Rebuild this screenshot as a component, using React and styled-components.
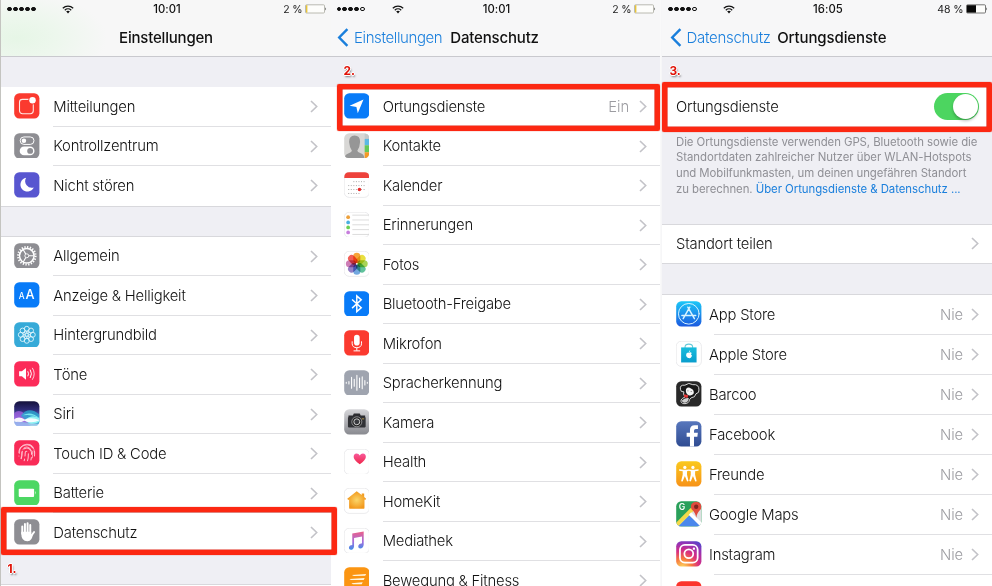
import React from "react";
import styled, { createGlobalStyle } from "styled-components";
import { Fingerprint } from "lucide-react";

const GlobalStyle = createGlobalStyle`
  * { box-sizing: border-box; }
  html, body { margin: 0; padding: 0; overflow: hidden; background: #fff; }
  body { font-family: Inter, "Liberation Sans", sans-serif; color: #111; }
`;

const Board = styled.main`
  position: relative;
  width: 992px;
  height: 586px;
  overflow: hidden;
  display: grid;
  grid-template-columns: 331px 329px 332px;
  background: #fff;
`;

const Phone = styled.section`
  height: 586px;
  overflow: hidden;
  min-width: 0;
  border-left: ${(p) => p.$edge || "0"};
`;

const Header = styled.header`
  height: 57px;
  border-bottom: 1px solid #c9c9ce;
  background: ${(p) =>
    p.$tint
      ? "radial-gradient(ellipse 90px 46px at 16px 38px, #e6f6e6 0%, #edf7ed 45%, rgba(247,247,247,0) 100%), #f7f7f7"
      : "#f7f7f8"};
`;

const StatusBar = styled.div`
  height: 18px;
  display: grid;
  grid-template-columns: 55px 75px 60px 1fr auto;
  align-items: center;
  padding: 0 ${(p) => p.$right}px 0 ${(p) => p.$left}px;
`;

const Signal = styled.div`
  display: flex;
  gap: 1.1px;
`;

const Dot = styled.i`
  width: 4.9px;
  height: 4.9px;
  border-radius: 50%;
  border: 0.8px solid #111;
  background: ${(p) => (p.$on ? "#111" : "transparent")};
`;

const Clock = styled.time`
  font-size: 11.3px;
  font-weight: 500;
  text-align: center;
  letter-spacing: 0.05px;
`;

const Charge = styled.div`
  display: flex;
  align-items: center;
  justify-content: flex-end;
  gap: 2.5px;
  font-size: 10.5px;
  white-space: nowrap;
  letter-spacing: -0.1px;
  color: #222;
`;

const NavBar = styled.nav`
  height: 38px;
  display: flex;
  align-items: center;
  justify-content: ${(p) => (p.$centered ? "center" : "flex-start")};
  padding-left: ${(p) => p.$pad || 0}px;
  white-space: nowrap;
  font-size: 15px;
`;

const Back = styled.a`
  display: flex;
  align-items: center;
  gap: 5px;
  color: #1a7fdc;
  font-weight: 350;
  letter-spacing: ${(p) => p.$ls}px;
  margin-right: ${(p) => p.$gap}px;
`;

const Title = styled.h1`
  margin: 0;
  font-size: 15px;
  font-weight: 500;
  letter-spacing: ${(p) => p.$ls || 0}px;
`;

const Spacer = styled.div`
  height: ${(p) => p.$h}px;
  background: #efeff4;
`;

const Group = styled.ul`
  list-style: none;
  margin: 0;
  padding: 0;
  background: #fff;
  border-bottom: ${(p) => (p.$open ? "0" : "1px solid #d8d8dc")};
  border-top: ${(p) => (p.$top ? "1px solid #d8d8dc" : "0")};
`;

const RowBox = styled.li`
  height: ${(p) => p.$h}px;
  display: flex;
  align-items: stretch;
  padding-left: ${(p) => p.$pad}px;
`;

const IconCell = styled.span`
  width: ${(p) => p.$w}px;
  display: flex;
  align-items: center;
  flex: none;
  padding-bottom: ${(p) => p.$lift}px;
  svg { display: block; }
`;

const RowBody = styled.div`
  flex: 1;
  position: relative;
  display: flex;
  align-items: center;
  font-size: 14.8px;
  font-weight: 350;
  white-space: nowrap;
  padding-right: ${(p) => p.$right}px;
  &::after {
    content: "";
    position: absolute;
    left: ${(p) => p.$inset}px;
    right: 0;
    bottom: 0;
    height: 1px;
    background: ${(p) => (p.$line ? "#e0e0e3" : "transparent")};
  }
`;

const Label = styled.span`
  flex: 1;
  letter-spacing: ${(p) => p.$ls}px;
`;

const Value = styled.span`
  color: #9c9ca1;
  margin-right: ${(p) => p.$gap}px;
  letter-spacing: -0.1px;
`;

const Footnote = styled.p`
  margin: 0;
  height: 97px;
  padding: 8px 0 0 16px;
  background: #efeff4;
  font-size: 11.4px;
  line-height: 15.85px;
  color: #8f8f95;
  white-space: nowrap;
`;

const Line = styled.span`
  display: block;
  letter-spacing: ${(p) => p.$ls}px;
`;

const Link = styled.a`
  color: #1a7fdc;
`;

const Switch = styled.span`
  width: 45px;
  height: 27px;
  border-radius: 14px;
  background: #4cd560;
  display: flex;
  justify-content: flex-end;
  padding: 1px;
`;

const Knob = styled.i`
  width: 25px;
  height: 25px;
  border-radius: 50%;
  background: #fff;
  box-shadow: 0 2px 3px rgba(0, 0, 0, 0.25);
`;

const Highlight = styled.div`
  position: absolute;
  left: ${(p) => p.$x}px;
  top: ${(p) => p.$y}px;
  width: ${(p) => p.$w}px;
  height: ${(p) => p.$h}px;
  border: 5px solid #fc2812;
  border-radius: 2px;
  box-shadow: inset 0 0 0 0.6px #e0281a, 0 0 1px #d21a0c;
`;

const Step = styled.b`
  position: absolute;
  left: ${(p) => p.$x}px;
  top: ${(p) => p.$y}px;
  font: 700 11.8px/12px Inter, sans-serif;
  color: #e01207;
  text-shadow: -1px 0 #fff, 1px 0 #fff, 0 -1px #fff, 0 1px #fff, 1px 2px 2px rgba(0, 0, 0, 0.5);
`;

const Divider = styled.div`
  position: absolute;
  left: 660px;
  top: 0;
  width: 2px;
  height: 586px;
  background: linear-gradient(90deg, #fbfbfb, #f4f4f6);
`;

const Wifi = () => (
  <svg width="12" height="9" viewBox="0 0 12 9" fill="none" stroke="#111" strokeWidth="1.25">
    <path d="M0.8 3.2C3.8.3 8.2.3 11.2 3.2" />
    <path d="M2.8 5.2C4.6 3.5 7.4 3.5 9.2 5.2" />
    <path d="M4.1 6.3C5.2 5.4 6.8 5.4 7.9 6.3L6 8.6Z" fill="#111" stroke="none" />
  </svg>
);

const BatteryGauge = ({ level, low }) => (
  <svg width="22" height="10" viewBox="0 0 22 10">
    <rect x=".5" y=".8" width="19" height="8.2" rx="1" fill="#fdfdfb" stroke={low ? "#aaa99f" : "#555"} strokeWidth=".8" />
    <rect x="1" y="1.2" width={level} height="7.4" fill={low ? "#e8c53a" : "#080808"} />
    <path d="M20.3 3.2Q22 4.9 20.3 6.6Z" fill="#444" />
  </svg>
);

const Chevron = () => (
  <svg width="8" height="13" viewBox="0 0 8 13" fill="none" stroke="#c3c3c8" strokeWidth="1.6">
    <path d="M1 1L6.7 6.5L1 12" />
  </svg>
);

const BackArrow = () => (
  <svg width="12" height="19" viewBox="0 0 12 19" fill="none" stroke="#1a7fdc" strokeWidth="2.4">
    <path d="M10.4 1.2L2.2 9.5L10.4 17.8" />
  </svg>
);

/* App icons share a 26-unit rounded tile. */
const Tile = ({ fill = "#fff", outline, children }) => (
  <svg width="25.6" height="25.6" viewBox="0 0 26 26">
    <rect x=".2" y=".2" width="25.6" height="25.6" rx="5.2" fill={fill} stroke={outline ? "#e6e6e8" : "none"} strokeWidth=".8" />
    {children}
  </svg>
);

const ring = (n, r, start = 0) =>
  Array.from({ length: n }, (_, i) => {
    const a = start + (i * 2 * Math.PI) / n;
    return [13 + r * Math.sin(a), 13 - r * Math.cos(a)];
  });

const icons = {
  notifications: (
    <Tile fill="#fb3a2f">
      <rect x="5.6" y="6.5" width="14" height="14.5" rx="3" fill="none" stroke="#ffe9e5" strokeWidth="1.1" />
      <circle cx="18.8" cy="7.3" r="4.3" fill="#fb3a2f" />
      <circle cx="18.8" cy="7.3" r="3.3" fill="#fff" />
    </Tile>
  ),
  control: (
    <Tile fill="#8e8e93">
      <rect x="6.3" y="4" width="14" height="7.6" rx="3.8" fill="none" stroke="#fff" />
      <circle cx="10.1" cy="7.8" r="2.3" fill="#fff" />
      <rect x="5.8" y="13.8" width="15" height="8.8" rx="4.4" fill="#fff" />
      <circle cx="16.4" cy="18.2" r="3" fill="#8e8e93" />
    </Tile>
  ),
  moon: (
    <Tile fill="#5856d0">
      <path d="M12.3 5.8A7.1 7.1 0 1 0 20.1 15.7A6.8 6.8 0 0 1 12.3 5.8Z" fill="#fff" />
    </Tile>
  ),
  gear: (
    <Tile fill="#8e8e93">
      <g fill="none" stroke="#fff">
        <circle cx="13" cy="13" r="8.9" strokeWidth="2.1" strokeDasharray="1.33 1.466" />
        <circle cx="13" cy="13" r="7.4" strokeWidth="1.5" />
        <circle cx="13" cy="13" r="2" strokeWidth=".9" />
        <path d="M15 13H20.2M12 11.3L9.4 6.8M12 14.7L9.4 19.2" strokeWidth="1.1" />
      </g>
    </Tile>
  ),
  display: (
    <Tile fill="#087bf8">
      <g fill="#fff" fontFamily="Inter" fontWeight="500">
        <text x="4.7" y="17.2" fontSize="8.4">A</text>
        <text x="11.6" y="17.2" fontSize="13">A</text>
      </g>
    </Tile>
  ),
  wallpaper: (
    <Tile fill="#36aad8">
      <g fill="none" stroke="#e3f6fc" strokeWidth=".9">
        {ring(8, 6.1).map(([x, y]) => <circle key={x + "," + y} cx={x} cy={y} r="2.5" />)}
        {ring(8, 3, 0.39).map(([x, y]) => <circle key={x + "," + y} cx={x} cy={y} r="1.2" strokeWidth=".7" />)}
        <circle cx="13" cy="13" r="1.5" />
      </g>
    </Tile>
  ),
  sound: (
    <Tile fill="#fc2b59">
      <path d="M5.2 10.5H8L12.2 7V19L8 15.5H5.2Z" fill="#fff" />
      <g fill="none" stroke="#fff" strokeWidth="1" strokeLinecap="round">
        <path d="M14.2 10.8Q15.5 13 14.2 15.2M16.6 9.1Q19 13 16.6 16.9" />
        <path d="M18.8 7.3Q22.4 13 18.8 18.7" opacity=".8" />
      </g>
    </Tile>
  ),
  siri: (
    <Tile fill="url(#siri)">
      <defs>
        <linearGradient id="siri" x2="0" y2="1">
          <stop offset="0" stopColor="#14113a" />
          <stop offset=".35" stopColor="#2e2b78" />
          <stop offset=".6" stopColor="#5c66c4" />
          <stop offset="1" stopColor="#a9dcf0" />
        </linearGradient>
        <clipPath id="siriClip"><rect x=".2" y=".2" width="25.6" height="25.6" rx="5.2" /></clipPath>
      </defs>
      <g clipPath="url(#siriClip)">
        <path d="M0 12.5Q5 7.5 11 13Q13 16 18 18L14 22L0 20Z" fill="#a65fe0" opacity=".75" />
        <path d="M7 15Q15 4.5 26 14V23Q16 24 7 15Z" fill="#2aa9cf" opacity=".8" />
        <path d="M9 14.5Q17 9.5 26 17.5Q18 13 9 14.5Z" fill="#78e6ee" />
        <path d="M11 19.5Q18 12.5 26 17.5V21Q18 26 11 19.5Z" fill="#8ff3f4" />
        <path d="M0 18.6Q5 15 11 18.8Q18 16 26 19.5Q18 23.5 10.5 20Q5 23 0 20.5Z" fill="#fff" opacity=".92" />
        <path d="M0 21.5Q9 20 18 26H0Z" fill="#98a8ef" opacity=".75" />
      </g>
    </Tile>
  ),
  touch: (
    <Tile fill="#f92b57">
      <g transform="translate(3.4 3.4)"><Fingerprint size={19.2} color="#ffc3d0" strokeWidth={1.3} /></g>
      <path d="M5.5 14Q5.2 5 13 4.3T20.7 14M9 10Q9.8 7 13 7T17.5 11M7 19Q8 16 8 12M18.5 18.5Q19.4 15 18.5 11" fill="none" stroke="#ffc0ce" strokeWidth=".8" />
    </Tile>
  ),
  battery: (
    <Tile fill="#4cd763">
      <rect x="4.8" y="8.8" width="15.6" height="8.4" rx=".9" fill="#fff" />
      <path d="M21.3 11Q22.7 13 21.3 15Z" fill="#fff" />
    </Tile>
  ),
  hand: (
    <Tile fill="#8e8e93">
      <g stroke="#fff" strokeWidth="2" strokeLinecap="round" fill="none">
        <path d="M8.4 7.5V15M11.1 5V14M13.8 4.2V14M16.5 6.2V15" />
        <path d="M20.4 13.2L16.5 18.5" />
      </g>
      <path d="M7.4 13H17.5V16L19.3 14.5Q18.5 23 13.5 22.7Q7.4 22.5 7.4 15Z" fill="#fff" />
    </Tile>
  ),
  location: (
    <Tile fill="#087bf8">
      <path d="M19.8 6.6L14 20.5L12.6 14.3L5.7 13Z" fill="#fff" />
    </Tile>
  ),
  contacts: (
    <Tile fill="#d8d7d5">
      <path d="M21 .4Q25.6.8 25.7 5V6H21Z" fill="#c5c9ca" />
      <path d="M21 6H25.8V12.5H21Z" fill="#5cb9e4" />
      <path d="M21 12.5H25.8V19.5H21Z" fill="#65c957" />
      <path d="M21 19.5H25.8Q25.8 25.3 21 25.7Z" fill="#f49a26" />
      <path d="M1.2 24Q1 21.8 4.8 20.5Q8 19.5 8 18Q5.7 15 5.2 9.5Q4.9 3 10.7 2.6Q16.7 2.8 16.3 9.5Q16 15 13.5 18Q13.5 19.5 17 20.5Q20.6 21.8 20.6 25.4H5Q2.5 25.4 1.2 24Z" fill="#969696" />
    </Tile>
  ),
  calendar: (
    <Tile outline>
      <path d="M.3 6.2V5.2Q.4.3 5.2.3H20.8Q25.6.3 25.7 5.2V6.2Z" fill="#ee423b" />
      <g stroke="#aaa" strokeWidth="1" strokeDasharray="1 1.6">
        <path d="M9.5 9.8H22M4.3 13.8H22M4.3 17.8H22M4.3 21.8H17" />
      </g>
      <circle cx="15.7" cy="17.7" r="1.8" fill="#e92c2b" />
    </Tile>
  ),
  reminders: (
    <Tile outline>
      <path d="M8.5 3.2H25.5M8.5 8.1H25.5M8.5 13H25.5M8.5 17.9H25.5M8.5 22.8H25.5" stroke="#ccc" strokeWidth=".7" />
      <circle cx="4.2" cy="5.3" r="1.9" fill="#eea13c" />
      <circle cx="4.2" cy="10.6" r="1.9" fill="#49afe1" />
      <circle cx="4.2" cy="15.7" r="1.9" fill="#6bcf52" />
      <circle cx="4.2" cy="20.8" r="1.9" fill="#c77edd" />
    </Tile>
  ),
  photos: (
    <Tile outline>
      <g style={{ isolation: "isolate" }}>
        {["#f79a22", "#e6dc2b", "#9fce45", "#4fbb90", "#649fdc", "#8a72c0", "#c86fae", "#f04d45"].map((c, i) => (
          <rect key={c} x="9.4" y="1.9" width="7.2" height="10.6" rx="3.6" fill={c} opacity=".9" style={{ mixBlendMode: "multiply" }} transform={`rotate(${i * 45} 13 13)`} />
        ))}
      </g>
      <circle cx="13" cy="13" r=".9" fill="#fff" opacity=".8" />
    </Tile>
  ),
  bluetooth: (
    <Tile fill="#087bf8">
      <path d="M8.2 8.6L17.5 17L13 21V5L17.5 9L8.2 17.4" fill="none" stroke="#fff" strokeWidth="1.5" />
    </Tile>
  ),
  mic: (
    <Tile fill="#fb3a2f">
      <rect x="10.2" y="4.7" width="5.7" height="11" rx="2.85" fill="#fff" />
      <path d="M8.3 11.5V14Q8.5 17.9 13 18Q17.6 17.9 17.8 14V11.5M13 18V21M9.7 21.2H16.4" fill="none" stroke="#fff" strokeWidth="1" />
    </Tile>
  ),
  speech: (
    <Tile fill="#9fa4af">
      <path d="M2.3 12.6V13.4M5 11.8V14.2M7.7 7.5V18.5M10.4 9.5V16.5M13.1 5.5V20.5M15.8 8.2V17.8M18.5 7V19M21.2 10.8V15.2M23.7 12.6V13.4" stroke="#fff" strokeWidth="1.1" strokeLinecap="round" />
    </Tile>
  ),
  camera: (
    <Tile fill="url(#cameraBg)">
      <defs><linearGradient id="cameraBg" x2="0" y2="1"><stop stopColor="#d6d6d9" /><stop offset="1" stopColor="#898a90" /></linearGradient></defs>
      <path d="M9 6.5L10 4.6H16L17 6.5H21.5V8H4.5V6.5Z" fill="#2d2d31" />
      <rect x="4" y="8" width="18" height="10.7" rx=".8" fill="#303135" />
      <circle cx="13" cy="13" r="5.1" fill="#222" stroke="#a7a7a9" strokeWidth=".8" />
      <circle cx="13" cy="13" r="3" fill="#38393d" stroke="#ddd" strokeWidth=".9" />
      <path d="M18 10H20.5" stroke="#e7bd50" strokeWidth=".7" />
    </Tile>
  ),
  health: (
    <Tile outline>
      <path d="M16 15.5Q9.8 11 9.8 8Q9.8 4.7 12.8 4.5Q15 4.5 16 6.5Q17 4.5 19.2 4.5Q22.2 4.7 22.2 8Q22.2 11 16 15.5Z" fill="url(#heart)" />
      <defs><linearGradient id="heart" x2="0" y2="1"><stop stopColor="#f95a9c" /><stop offset="1" stopColor="#ef2649" /></linearGradient></defs>
    </Tile>
  ),
  home: (
    <Tile outline>
      <defs><radialGradient id="homeGlow"><stop stopColor="#fbd669" /><stop offset="1" stopColor="#f2991d" /></radialGradient></defs>
      <path d="M12.9 3.2L18 7.2V5.5H20.5V9.2L22.5 10.8L21.5 12.2L20.8 11.8V20Q20.8 21.2 19.6 21.2H6.4Q5.2 21.2 5.2 20V11.8L4.3 12.3L3.3 11Z" fill="url(#homeGlow)" />
    </Tile>
  ),
  music: (
    <Tile outline>
      <defs><linearGradient id="tune" x2="0" y2="1"><stop stopColor="#ed6087" /><stop offset=".55" stopColor="#a46cdd" /><stop offset="1" stopColor="#3d8fe6" /></linearGradient></defs>
      <path d="M8.4 5.5L20 3.5V17Q19.6 20.8 16.2 20.7Q14 20.3 14.6 17.7Q15.2 15.7 18.3 15.5V8.7L10.2 10.1V18.8Q9.7 22.2 6.8 22.2Q4.6 21.7 5 19.3Q5.7 17.2 8.4 17.2Z" fill="url(#tune)" />
    </Tile>
  ),
  fitness: (
    <Tile fill="#fb9512">
      <path d="M8 8L22.5 7L21.5 9L10 9.2ZM5.5 12.3L21 11.3L20 13.2L7 13.3ZM7.5 16.5L19 15.6L18 17.5L9 17.6ZM3 20.8L16.5 19.8L15.5 21.5L5 21.6Z" fill="#fff6df" />
    </Tile>
  ),
  appStore: (
    <Tile fill="url(#storeBg)">
      <defs><linearGradient id="storeBg" x2="0" y2="1"><stop stopColor="#1cc8f7" /><stop offset="1" stopColor="#1b5ae0" /></linearGradient></defs>
      <g fill="none" stroke="#d9f4ff" strokeLinecap="round">
        <circle cx="13" cy="13" r="10.5" strokeWidth="1" />
        <path d="M12 6.3L18.7 18M14 6.3L7.3 18M6 14.8H15.3M17.2 14.8H20" strokeWidth="1.5" />
      </g>
    </Tile>
  ),
  appleStore: (
    <Tile outline>
      <path d="M9.2 7V5.8Q9.5 3.2 13 3.2Q16.7 3.2 16.9 5.8V7" fill="none" stroke="#68cad9" strokeWidth="1.1" />
      <path d="M5.2 6.5H20.9V21.8H5.2Z" fill="url(#bagBg)" />
      <defs><linearGradient id="bagBg" x2="0" y2="1"><stop stopColor="#19bddd" /><stop offset="1" stopColor="#099dcd" /></linearGradient></defs>
      <path d="M13.2 11.9Q14.8 11 15.9 12.2Q14.4 13.7 16.3 15Q15.2 18.1 13.1 17.2Q10.9 18 10.2 14.6Q10.3 11.1 13.2 11.9ZM13 11.5Q13 10 14.5 9.5Q14.4 11.2 13 11.5Z" fill="#fff" />
    </Tile>
  ),
  barcoo: (
    <Tile fill="#292929">
      <path d="M4.5 8.4Q3.7 3.6 9 4.3Q13 1 17 3.7Q23.5 3 23.3 9Q24 12 20.3 13Q19.5 17 15.5 17L13.7 19Q13.2 23.3 8 23Q4.5 22.5 5.2 19.3Q6.3 17.4 9.2 16.2Q6.8 13.3 8 11Q4.7 11.5 4.5 8.4Z" fill="#191919" stroke="#eee" strokeWidth=".9" />
      <path d="M10.2 8Q12.4 5.5 15.2 7.5Q18.4 8.5 18.1 12.5Q16.4 15.5 12.8 14.4Q9.2 12.5 10.2 8Z" fill="#f4f4f4" />
      <path d="M6.2 19.5Q9.2 16.8 13 17.2Q12.5 22.3 8.6 22.1Q5.8 22 6.2 19.5Z" fill="#cfcfcf" />
      <path d="M8.3 13.4L12.5 14.5L11.7 17.2L8 16.2Z" fill="#e43737" />
      <path d="M11.8 10H12.5M15 10.7H15.8" stroke="#222" strokeWidth=".8" />
    </Tile>
  ),
  facebook: (
    <Tile fill="url(#fbBg)">
      <defs><linearGradient id="fbBg" x2="0" y2="1"><stop stopColor="#5877bd" /><stop offset="1" stopColor="#2f4c92" /></linearGradient></defs>
      <path d="M14.2 25.8V16H10.8V11.9H14.2V9Q14.2 4.3 19 4.2H22.3V8.2H20Q18.3 8.2 18.3 9.8V11.9H22.2L21.7 16H18.3V25.8Z" fill="#fff" />
    </Tile>
  ),
  friends: (
    <Tile fill="url(#friendBg)">
      <defs><linearGradient id="friendBg" x2="0" y2="1"><stop stopColor="#fac91e" /><stop offset="1" stopColor="#f79218" /></linearGradient></defs>
      <g fill="#fff">
        <circle cx="9" cy="6.5" r="1.65" /><circle cx="17.2" cy="6.5" r="1.65" />
        <path d="M3.2 8.5L7.5 9H10.7L13.1 8.6L15.5 9H18.7L22.9 8.5V9.8L19.4 10.5V14L21 20.5L19.6 20.8L17.2 15.3L15 20.8L13.5 20.4L15 14V10.5L13.1 9.9L11.2 10.5V14L12.7 20.4L11.3 20.8L9 15.3L6.7 20.8L5.2 20.5L6.8 14V10.5L3.2 9.8Z" />
      </g>
    </Tile>
  ),
  maps: (
    <Tile fill="#2aa05a">
      <defs><clipPath id="mapClip"><rect x=".2" y=".2" width="25.6" height="25.6" rx="5.2" /></clipPath></defs>
      <g clipPath="url(#mapClip)">
        <path d="M0 26L26 0V26Z" fill="#dedfe1" />
        <path d="M2 26L13.4 14.6L26 26Z" fill="#4b88ec" />
        <path d="M-1 23L16 6L19 9L2 26Z" fill="#f4d94a" />
        <path d="M13 14L15.5 11.5L27 23V28Z" fill="#fff" />
        <path d="M20.5 17Q19.8 11.5 15.8 8.4Q13.4 1.8 20.5.8Q27.5 1.5 25.2 8.4Q21.4 11.5 20.5 17Z" fill="#df4b3e" />
        <circle cx="20.5" cy="5.8" r="2.2" fill="#7e2520" />
      </g>
      <text x="2.7" y="9.6" fontFamily="Inter" fontSize="8.8" fontWeight="600" fill="#fff">G</text>
    </Tile>
  ),
  instagram: (
    <Tile fill="url(#igBg)">
      <defs><radialGradient id="igBg" cx=".25" cy="1.05" r="1.2"><stop stopColor="#fddc62" /><stop offset=".3" stopColor="#f77a3c" /><stop offset=".55" stopColor="#d92e80" /><stop offset=".8" stopColor="#9633b5" /><stop offset="1" stopColor="#5146c9" /></radialGradient></defs>
      <g fill="none" stroke="#fff" strokeWidth="1.8">
        <rect x="4" y="4" width="18" height="18" rx="5" /><circle cx="13" cy="13" r="4.5" />
      </g>
      <circle cx="18.2" cy="7.8" r="1.2" fill="#fff" />
    </Tile>
  ),
  red: <Tile fill="#fb352d" />,
};

const Status = ({ time, charge, level, low, full, left, right }) => (
  <StatusBar $left={left} $right={right}>
    <Signal>{[0, 1, 2, 3, 4].map((i) => <Dot key={i} $on={full || i < 4} />)}</Signal>
    <Wifi />
    <Clock>{time}</Clock>
    <span />
    <Charge>{charge}<BatteryGauge level={level} low={low} /></Charge>
  </StatusBar>
);

const Row = ({ icon, text, value, ls = -0.2, h = 39.5, pad, cell = 39, inset = 0, right = 13, gap = 10, lift = 1.6, last }) => (
  <RowBox $h={h} $pad={pad}>
    {icon && <IconCell $w={cell} $lift={lift}>{icons[icon]}</IconCell>}
    <RowBody $inset={inset} $right={right} $line={!last}>
      <Label $ls={ls}>{text}</Label>
      {value && <Value $gap={gap}>{value}</Value>}
      {text && <Chevron />}
    </RowBody>
  </RowBox>
);

const settingsTop = [["notifications", "Mitteilungen"], ["control", "Kontrollzentrum"], ["moon", "Nicht stören"]];
const settingsMain = [
  ["gear", "Allgemein"], ["display", "Anzeige & Helligkeit"], ["wallpaper", "Hintergrundbild"], ["sound", "Töne"],
  ["siri", "Siri"], ["touch", "Touch ID & Code"], ["battery", "Batterie"], ["hand", "Datenschutz"],
];
const privacy = [
  ["location", "Ortungsdienste", "Ein"], ["contacts", "Kontakte"], ["calendar", "Kalender"], ["reminders", "Erinnerungen"],
  ["photos", "Fotos"], ["bluetooth", "Bluetooth-Freigabe"], ["mic", "Mikrofon"], ["speech", "Spracherkennung"],
  ["camera", "Kamera"], ["health", "Health"], ["home", "HomeKit"], ["music", "Mediathek"], ["fitness", "Bewegung & Fitness"],
];
const apps = [
  ["appStore", "App Store"], ["appleStore", "Apple Store"], ["barcoo", "Barcoo"], ["facebook", "Facebook"],
  ["friends", "Freunde"], ["maps", "Google Maps"], ["instagram", "Instagram"],
];

export default function App() {
  return (
    <>
      <GlobalStyle />
      <Board>
        <Phone $edge="1px solid #c4c4c0">
          <Header $tint>
            <Status time="10:01" charge="2 %" level={1.4} low full left={6} right={4} />
            <NavBar $centered><Title $ls={-0.2}>Einstellungen</Title></NavBar>
          </Header>
          <Spacer $h={30} />
          <Group>
            {settingsTop.map(([icon, text], i) => <Row key={text} icon={icon} text={text} pad={13.3} last={i === 2} />)}
          </Group>
          <Spacer $h={29} />
          <Group $top>
            {settingsMain.map(([icon, text], i) => <Row key={text} icon={icon} text={text} pad={13.3} last={i === 7} />)}
          </Group>
          <Spacer $h={30} />
          <Group $top $open />
        </Phone>

        <Phone>
          <Header>
            <Status time="10:01" charge="2 %" level={1.4} low left={5.5} right={4} />
            <NavBar $pad={6}>
              <Back $gap={8} $ls={-0.38}><BackArrow />Einstellungen</Back>
              <Title $ls={-0.18}>Datenschutz</Title>
            </NavBar>
          </Header>
          <Spacer $h={30} />
          <Group $open>
            {privacy.map(([icon, text, value]) => <Row key={text} icon={icon} text={text} value={value} pad={12.7} />)}
          </Group>
        </Phone>

        <Phone>
          <Header>
            <Status time="16:05" charge="48 %" level={9} left={8} right={4} />
            <NavBar $pad={9.5}>
              <Back $gap={6.5} $ls={-0.28}><BackArrow />Datenschutz</Back>
              <Title $ls={-0.12}>Ortungsdienste</Title>
            </NavBar>
          </Header>
          <Spacer $h={30} />
          <RowBox as="div" $h={39.5} $pad={16}>
            <RowBody $inset={0} $right={13}><Label $ls={-0.2}>Ortungsdienste</Label><Switch><Knob /></Switch></RowBody>
          </RowBox>
          <Footnote>
            <Line $ls={-0.07}>Die Ortungsdienste verwenden GPS, Bluetooth sowie die</Line>
            <Line $ls={-0.04}>Standortdaten zahlreicher Nutzer über WLAN-Hotspots</Line>
            <Line $ls={-0.07}>und Mobilfunkmasten, um deinen ungefähren Standort</Line>
            <Line $ls={-0.05}>zu berechnen. <Link>Über Ortungsdienste &amp; Datenschutz ...</Link></Line>
          </Footnote>
          <Group $top>
            <Row text="Standort teilen" pad={16} h={38} last />
          </Group>
          <Spacer $h={30} />
          <Group $top $open>
            {apps.map(([icon, text]) => <Row key={text} icon={icon} text={text} value="Nie" pad={16} cell={33} inset={5} h={40} gap={8} lift={0.6} />)}
            <Row icon="red" pad={16} cell={33} inset={5} h={40} lift={0.6} />
          </Group>
        </Phone>

        <Divider />
        <Highlight $x={1} $y={507} $w={335.5} $h={48} />
        <Highlight $x={337} $y={84} $w={323} $h={47} />
        <Highlight $x={662} $y={82} $w={330} $h={50} />
        <Step $x={7.5} $y={563}>1.</Step>
        <Step $x={343.5} $y={65}>2.</Step>
        <Step $x={669.5} $y={64.5}>3.</Step>
      </Board>
    </>
  );
}
